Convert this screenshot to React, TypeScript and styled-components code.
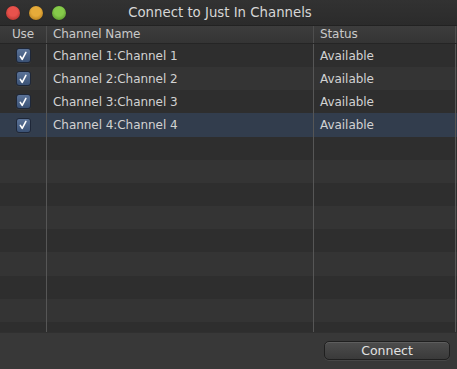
import React from 'react';
import styled, { createGlobalStyle } from 'styled-components';

const GlobalStyle = createGlobalStyle`
  html, body {
    margin: 0;
    padding: 0;
    background: #383838;
  }
  * {
    box-sizing: border-box;
  }
`;

const Window = styled.div`
  width: 457px;
  height: 369px;
  background: #383838;
  display: flex;
  flex-direction: column;
  font-family: 'DejaVu Sans', Verdana, sans-serif;
  overflow: hidden;
`;

const TitleBar = styled.div`
  height: 26px;
  flex: none;
  display: flex;
  align-items: center;
  position: relative;
  background: linear-gradient(#323232, #2b2b2b);
  border-bottom: 1px solid #222222;
  padding-left: 6px;
  gap: 9px;
`;

const Light = styled.span<{ $color: string; $edge: string }>`
  width: 14px;
  height: 14px;
  border-radius: 50%;
  background: radial-gradient(circle at 50% 40%, ${(p) => p.$color} 0%, ${(p) => p.$color} 40%, ${(p) => p.$edge} 100%);
  box-shadow: 0 0 1px #00000088;
`;

const Title = styled.div`
  position: absolute;
  left: 0;
  right: 0;
  top: 0;
  bottom: 0;
  display: flex;
  align-items: center;
  justify-content: center;
  padding-right: 17px;
  color: #d6d6d6;
  font-size: 13.3px;
  pointer-events: none;
`;

const Table = styled.div`
  flex: none;
  height: 306px;
  display: flex;
  flex-direction: column;
  overflow: hidden;
`;

const HeaderRow = styled.div`
  height: 18px;
  flex: none;
  display: grid;
  grid-template-columns: 47px 267px 142px;
  background: linear-gradient(#3d3d3d, #343434);
  border-bottom: 1px solid #252525;
`;

const HeaderCell = styled.div<{ $center?: boolean }>`
  border-right: 1px solid #4e4e4e;
  color: #c9c9c9;
  font-size: 12px;
  letter-spacing: -0.1px;
  line-height: 17px;
  padding-left: ${(p) => (p.$center ? '0' : '6px')};
  text-align: ${(p) => (p.$center ? 'center' : 'left')};
  white-space: nowrap;
`;

const Body = styled.div`
  flex: 1;
  overflow: hidden;
`;

const Row = styled.div<{ $odd: boolean; $selected?: boolean }>`
  height: 23.17px;
  display: grid;
  grid-template-columns: 47px 267px 142px;
  background: ${(p) => (p.$selected ? '#323d4d' : p.$odd ? '#343434' : '#2e2e2e')};
`;

const Cell = styled.div<{ $center?: boolean }>`
  border-right: 1px solid #565656;
  color: #d2d2d2;
  font-size: 12px;
  letter-spacing: -0.05px;
  display: flex;
  align-items: center;
  justify-content: ${(p) => (p.$center ? 'center' : 'flex-start')};
  padding-left: ${(p) => (p.$center ? '0' : '6px')};
  white-space: nowrap;
  overflow: hidden;
`;

const CheckBox = styled.span`
  width: 15px;
  height: 15px;
  border-radius: 3px;
  background: linear-gradient(#5b7398, #3b5275);
  border: 1px solid #1e2738;
  box-shadow: 0 1px 0 #4a4a4a55;
  display: flex;
  align-items: center;
  justify-content: center;
`;

const Footer = styled.div`
  flex: 1;
  display: flex;
  justify-content: flex-end;
  align-items: flex-start;
  padding: 8px 7px 0 0;
  background: #383838;
  border-top: 1px solid #303030;
`;

const Button = styled.button`
  width: 126px;
  height: 19px;
  border-radius: 5px;
  border: 1px solid #1f1f1f;
  background: linear-gradient(#4d4d4d, #3a3a3a);
  box-shadow: inset 0 1px 0 #5e5e5e, 0 1px 0 #474747;
  color: #e2e2e2;
  font-family: 'DejaVu Sans', Verdana, sans-serif;
  font-size: 12.5px;
  padding: 0;
  line-height: 16px;
`;

const Check = () => (
  <svg width="10" height="10" viewBox="0 0 10 10">
    <path d="M2.3 5.4 L4.2 8.3 L7.9 1.4" fill="none" stroke="#ffffff" strokeWidth="1.6" strokeLinecap="round" strokeLinejoin="round" />
  </svg>
);

const channels = [1, 2, 3, 4];

export default function App() {
  const emptyRows = Array.from({ length: 9 });
  return (
    <>
      <GlobalStyle />
      <Window>
        <TitleBar>
          <Light $color="#e8524c" $edge="#a02a25" />
          <Light $color="#e6ab3a" $edge="#a36e14" />
          <Light $color="#86cb4a" $edge="#4a8323" />
          <Title>Connect to Just In Channels</Title>
        </TitleBar>
        <Table>
          <HeaderRow>
            <HeaderCell $center>Use</HeaderCell>
            <HeaderCell>Channel Name</HeaderCell>
            <HeaderCell>Status</HeaderCell>
          </HeaderRow>
          <Body>
            {channels.map((n, i) => (
              <Row key={n} $odd={i % 2 === 1} $selected={i === 3}>
                <Cell $center>
                  <CheckBox>
                    <Check />
                  </CheckBox>
                </Cell>
                <Cell>{`Channel ${n}:Channel ${n}`}</Cell>
                <Cell>Available</Cell>
              </Row>
            ))}
            {emptyRows.map((_, i) => (
              <Row key={`e${i}`} $odd={(i + 4) % 2 === 1}>
                <Cell />
                <Cell />
                <Cell />
              </Row>
            ))}
          </Body>
        </Table>
        <Footer>
          <Button>Connect</Button>
        </Footer>
      </Window>
    </>
  );
}
